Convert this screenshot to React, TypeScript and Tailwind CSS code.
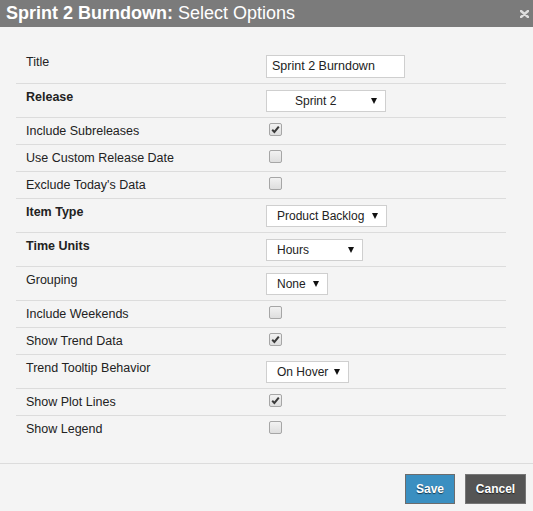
import React from "react";

type Option =
  | { kind: "text"; label: string; value: string; bold?: boolean }
  | { kind: "check"; label: string; checked: boolean; bold?: boolean }
  | {
      kind: "select";
      label: string;
      value: string;
      width: string;
      padLeft?: string;
      bold?: boolean;
    };

const options: Option[] = [
  { kind: "text", label: "Title", value: "Sprint 2 Burndown" },
  { kind: "select", label: "Release", value: "Sprint 2", width: "w-[120px]", padLeft: "pl-[28px]", bold: true },
  { kind: "check", label: "Include Subreleases", checked: true },
  { kind: "check", label: "Use Custom Release Date", checked: false },
  { kind: "check", label: "Exclude Today's Data", checked: false },
  { kind: "select", label: "Item Type", value: "Product Backlog", width: "w-[121px]", bold: true },
  { kind: "select", label: "Time Units", value: "Hours", width: "w-[97px]", bold: true },
  { kind: "select", label: "Grouping", value: "None", width: "w-[62px]" },
  { kind: "check", label: "Include Weekends", checked: false },
  { kind: "check", label: "Show Trend Data", checked: true },
  { kind: "select", label: "Trend Tooltip Behavior", value: "On Hover", width: "w-[83px]" },
  { kind: "check", label: "Show Plot Lines", checked: true },
  { kind: "check", label: "Show Legend", checked: false },
];

const Checkbox = ({ checked }: { checked: boolean }) => (
  <span className="ml-[3px] -mt-[1px] flex h-[13px] w-[13px] items-center justify-center rounded-[2px] border border-[#a6a6a6] bg-gradient-to-b from-[#f2f2f2] to-[#dedede]">
    {checked ? (
      <svg width="9" height="9" viewBox="0 0 9 9">
        <path d="M1.2 4.8 L3.4 7 L7.8 1.6" fill="none" stroke="#3a3a3a" strokeWidth="2" />
      </svg>
    ) : null}
  </span>
);

const Select = ({ value, width, padLeft }: { value: string; width: string; padLeft?: string }) => (
  <div
    className={`flex h-[22px] items-center justify-between gap-[6px] border border-[#cfcfcf] bg-white pr-[8px] text-[12px] text-[#222] ${width} ${padLeft ?? "pl-[10px]"}`}
  >
    <span className="whitespace-nowrap">{value}</span>
    <svg width="6" height="6" viewBox="0 0 6 6" className="shrink-0">
      <polygon points="0,0 6,0 3,6" fill="#111" />
    </svg>
  </div>
);

const Row = ({ option, last }: { option: Option; last: boolean }) => (
  <div className={`flex items-start pt-[6px] pb-[5px] ${last ? "" : "border-b border-[#dcdcdc]"}`}>
    <div
      className={`w-[250px] pl-[10px] leading-[15px] text-[12.5px] text-[#222] ${option.bold ? "font-bold" : ""}`}
    >
      {option.label}
    </div>
    {option.kind === "text" ? (
      <div className="flex h-[23px] w-[139px] items-center border border-[#cfcfcf] bg-white px-[5px] text-[12.5px] text-[#222]">
        {option.value}
      </div>
    ) : option.kind === "check" ? (
      <Checkbox checked={option.checked} />
    ) : (
      <Select value={option.value} width={option.width} padLeft={option.padLeft} />
    )}
  </div>
);

export default function App() {
  return (
    <div className="flex h-[511px] w-[533px] flex-col bg-[#f4f4f4] font-['Liberation_Sans',Arial,sans-serif]">
      <div className="flex h-[27px] items-center justify-between bg-[#7b7b7b] pl-[6px] pr-[4px] text-white">
        <div className="text-[18px] leading-[27px]">
          <span className="font-bold">Sprint 2 Burndown:</span> Select Options
        </div>
        <svg width="9" height="8" viewBox="0 0 9 8">
          <path d="M1 1 L8 7 M8 1 L1 7" stroke="#dedede" strokeWidth="2.4" strokeLinecap="round" />
        </svg>
      </div>

      <div className="flex-1 pt-[22px] pl-[16px] pr-[27px]">
        {options.map((o, i) => (
          <Row key={o.label} option={o} last={i === options.length - 1} />
        ))}
      </div>

      <div className="flex h-[48px] items-start justify-end gap-[10px] border-t border-[#dcdcdc] pt-[10px] pr-[7px]">
        <button className="h-[30px] w-[50px] border border-[#6c6c6c] bg-[#3a8fc1] text-[12px] font-bold text-white [text-shadow:0_1px_1px_rgba(0,0,0,0.6)]">
          Save
        </button>
        <button className="h-[30px] w-[61px] border border-[#767676] bg-[#555555] text-[12px] font-bold text-white [text-shadow:0_1px_1px_rgba(0,0,0,0.6)]">
          Cancel
        </button>
      </div>
    </div>
  );
}
